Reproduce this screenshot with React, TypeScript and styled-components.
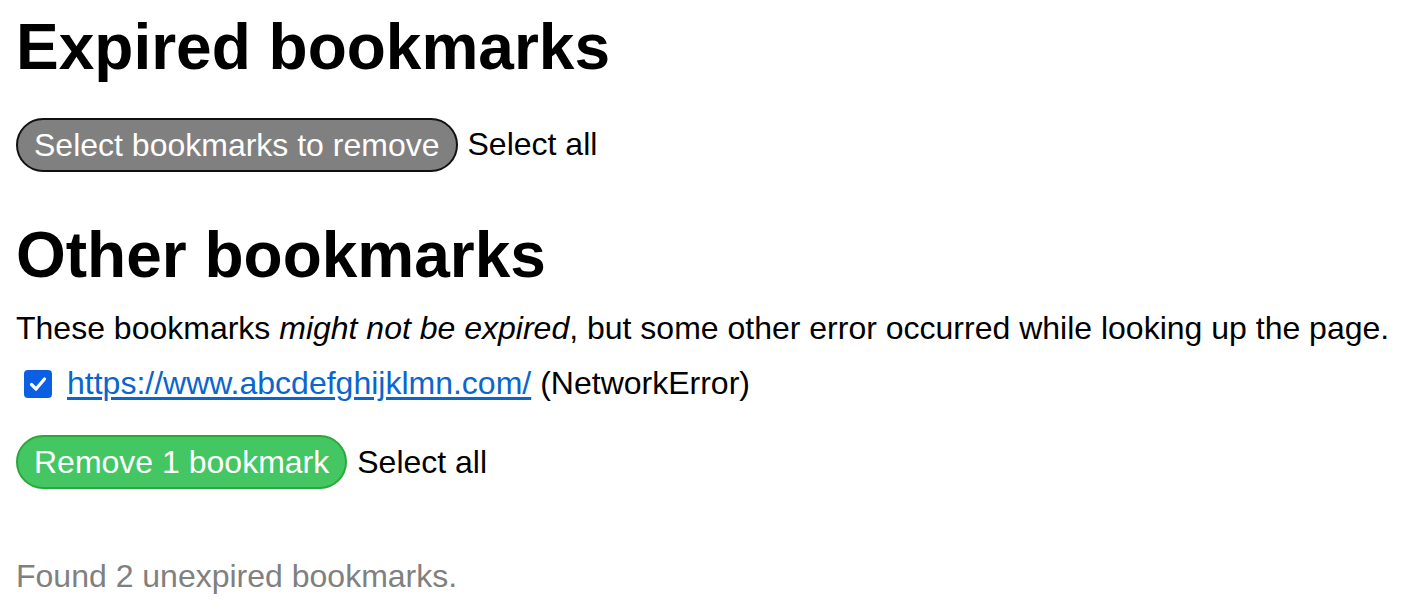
import React from "react";
import styled, { createGlobalStyle } from "styled-components";

const Global = createGlobalStyle`
  html, body { margin: 0; padding: 0; background: #fff; }
  body { font-family: "Liberation Sans", Arial, sans-serif; font-size: 32px; color: #000; }
`;

const Page = styled.main`
  padding: 11px 16px 0 16px;
  display: flex;
  flex-direction: column;
  align-items: flex-start;
`;

const Heading = styled.h1<{ $top: number }>`
  font-size: 64px;
  font-weight: 700;
  line-height: 73.5px;
  margin: ${(p) => p.$top}px 0 0 0;
`;

const ActionRow = styled.div<{ $top: number }>`
  display: flex;
  align-items: center;
  gap: 10px;
  margin-top: ${(p) => p.$top}px;
`;

const PillButton = styled.button<{ $variant: "grey" | "green" }>`
  font-family: "Liberation Sans", Arial, sans-serif;
  font-size: 32px;
  line-height: 37px;
  padding: 7px 16px 6px 16px;
  border-radius: 999px;
  border: 2px solid ${(p) => (p.$variant === "grey" ? "#111" : "#2aa83b")};
  background: ${(p) => (p.$variant === "grey" ? "#808080" : "#44c662")};
  color: #fff;
  cursor: pointer;
`;

const Plain = styled.span`
  font-size: 32px;
  line-height: 37px;
`;

const Para = styled.p`
  margin: 18px 0 0 0;
  line-height: 37px;
`;

const ItemRow = styled.label`
  display: flex;
  align-items: center;
  margin-top: 18px;
  line-height: 37px;
  padding-left: 8px;
`;

const HiddenInput = styled.input`
  position: absolute;
  opacity: 0;
  width: 0;
  height: 0;
  margin: 0;
`;

const Box = styled.span`
  width: 28px;
  height: 28px;
  border-radius: 4px;
  background: #0b5fe3;
  display: inline-flex;
  align-items: center;
  justify-content: center;
  margin-right: 15px;
`;

const Link = styled.a`
  color: #0a66cc;
  text-decoration: underline;
  text-underline-offset: 3px;
  margin-right: 9px;
`;

const Footer = styled.p`
  margin: 69px 0 0 0;
  color: #808080;
  line-height: 37px;
`;

export default function App() {
  return (
    <>
      <Global />
      <Page>
        <Heading $top={0}>Expired bookmarks</Heading>
        <ActionRow $top={33}>
          <PillButton $variant="grey">Select bookmarks to remove</PillButton>
          <Plain>Select all</Plain>
        </ActionRow>
        <Heading $top={47}>Other bookmarks</Heading>
        <Para>
          These bookmarks <em>might not be expired</em>, but some other error occurred while looking up the page.
        </Para>
        <ItemRow>
          <HiddenInput type="checkbox" defaultChecked />
          <Box>
            <svg width="20" height="20" viewBox="0 0 20 20">
              <path d="M3.5 10.5 L8 15 L16.5 5" fill="none" stroke="#fff" strokeWidth="3.2" strokeLinecap="round" strokeLinejoin="round" />
            </svg>
          </Box>
          <Link href="#">https://www.abcdefghijklmn.com/</Link>
          <span>(NetworkError)</span>
        </ItemRow>
        <ActionRow $top={33}>
          <PillButton $variant="green">Remove 1 bookmark</PillButton>
          <Plain>Select all</Plain>
        </ActionRow>
        <Footer>Found 2 unexpired bookmarks.</Footer>
      </Page>
    </>
  );
}
